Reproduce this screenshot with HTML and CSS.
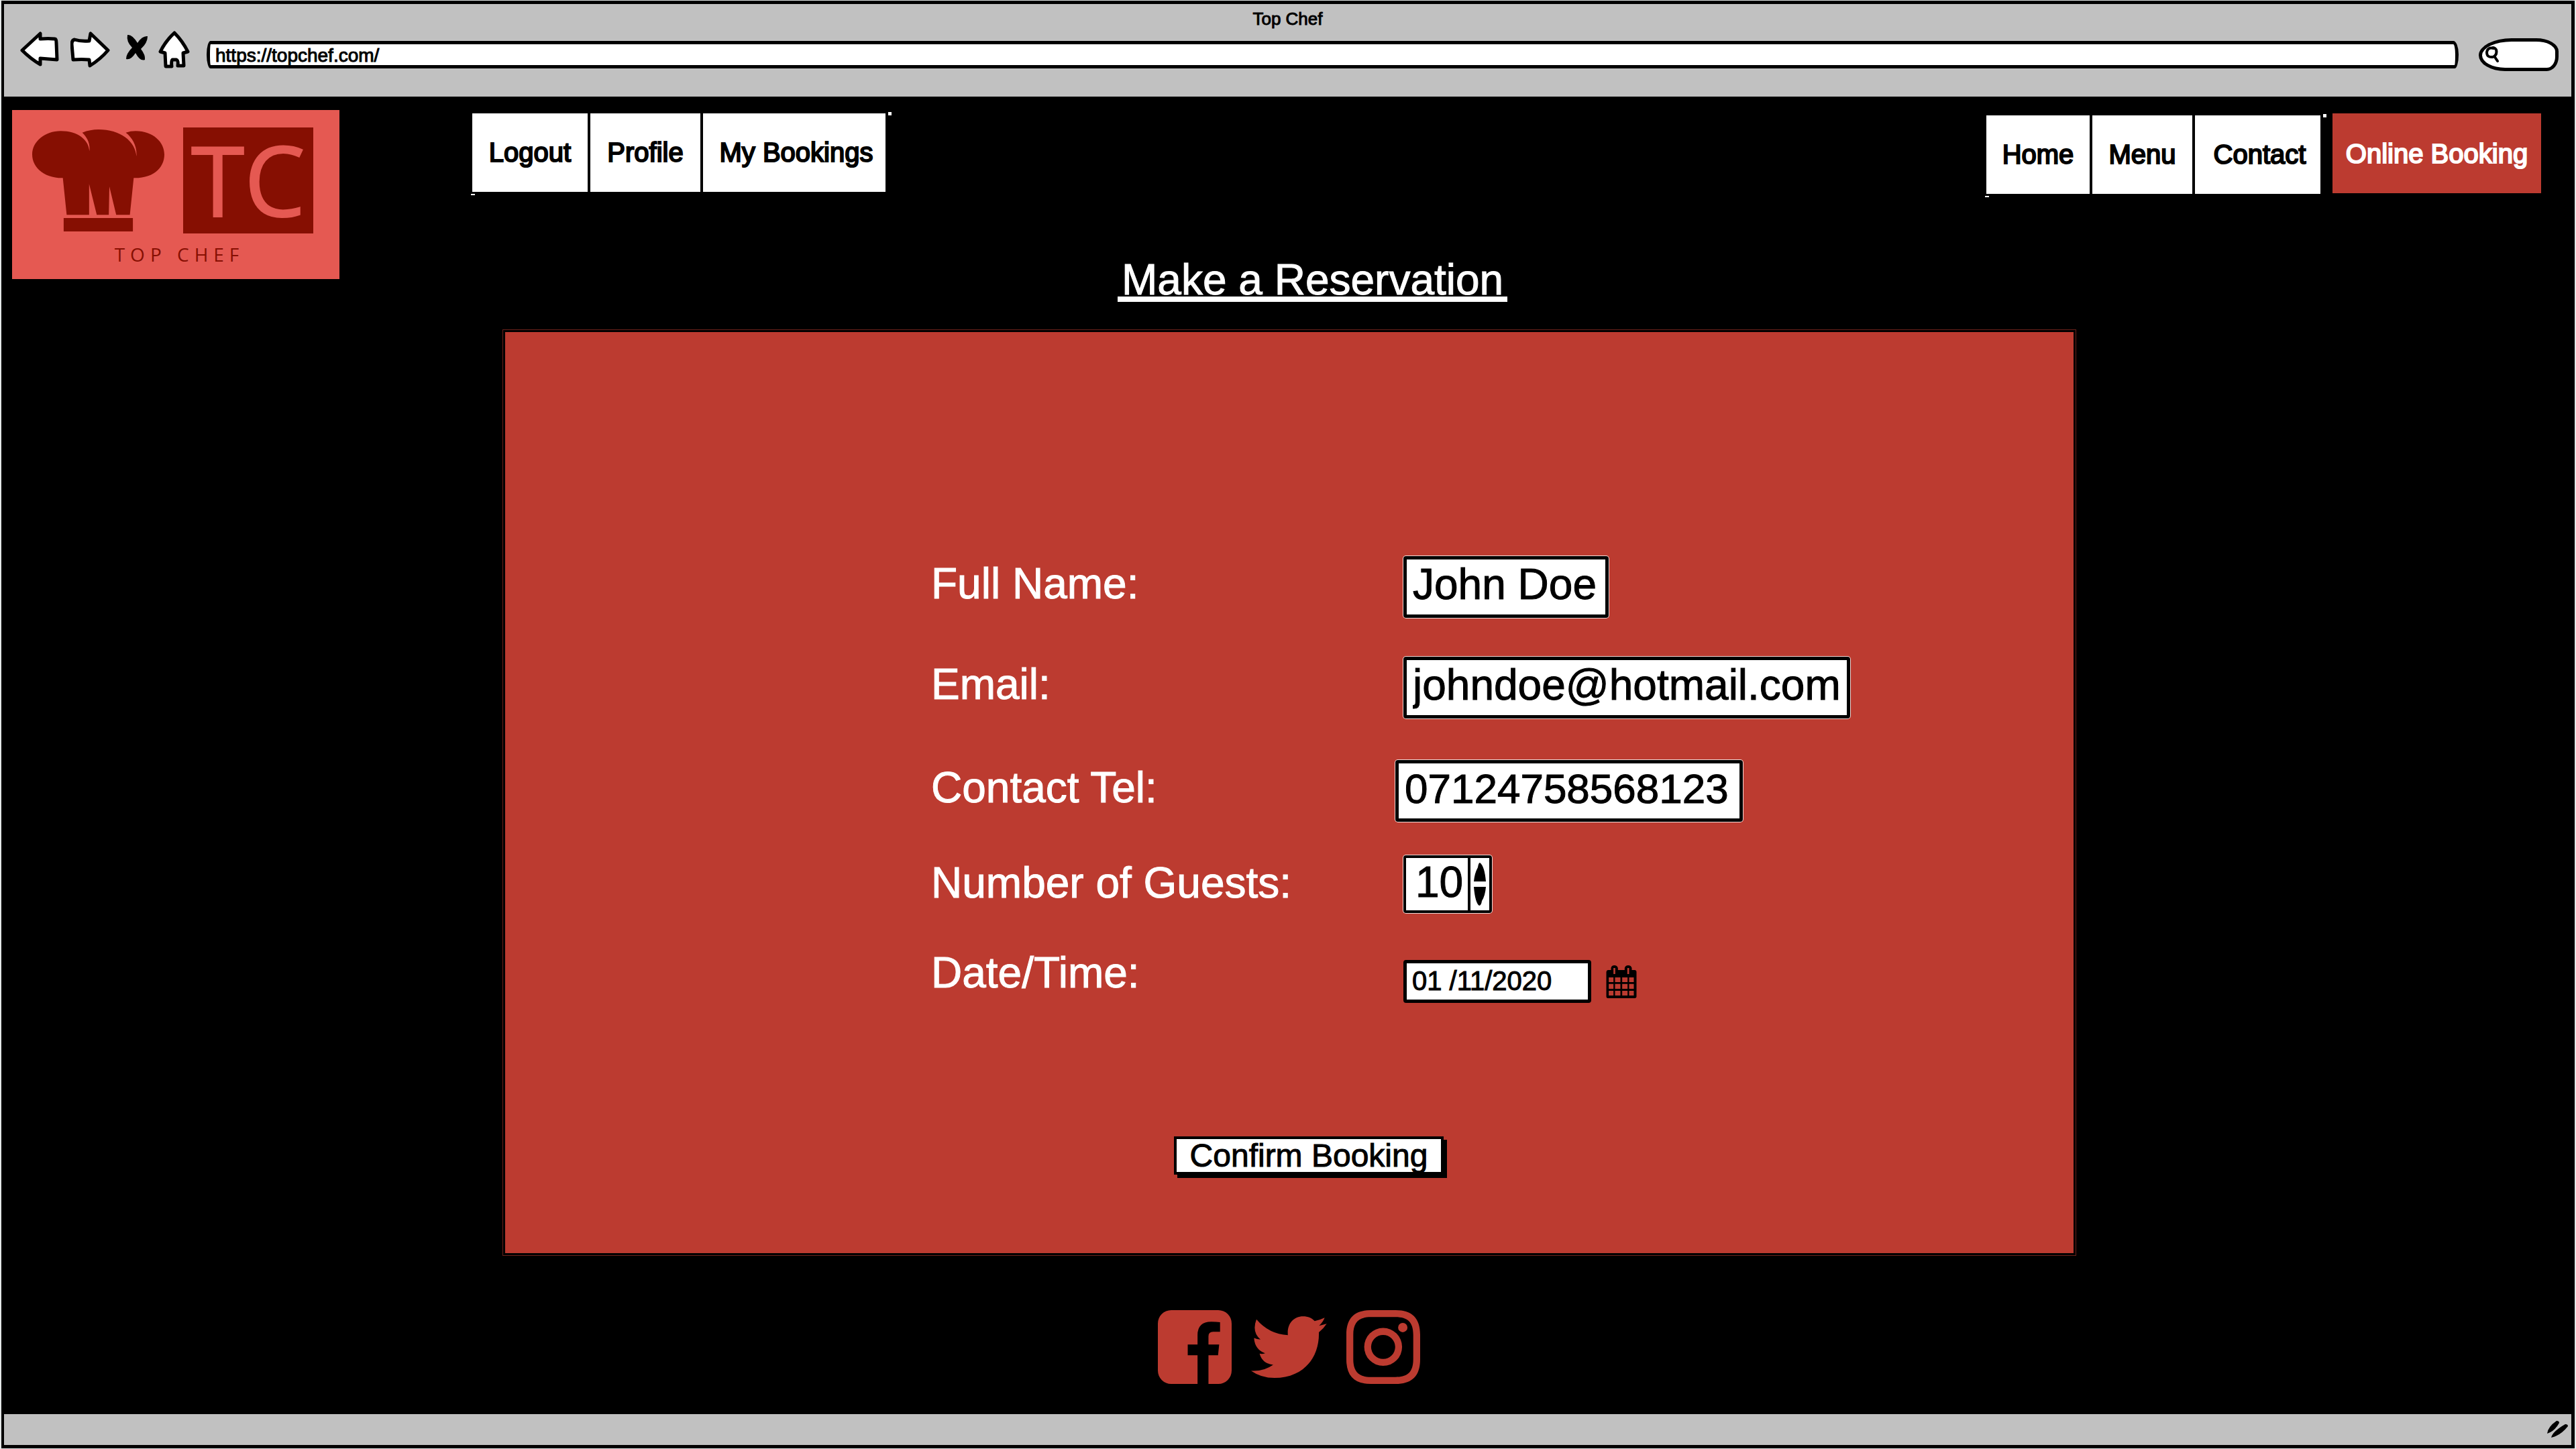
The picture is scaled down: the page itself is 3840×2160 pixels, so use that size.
FILE: index.html
```html
<!DOCTYPE html>
<html lang="en">
<head>
<meta charset="utf-8">
<title>Top Chef</title>
<link rel="stylesheet" href="styles.css">
</head>
<body>
<div class="window">
  <header class="chrome">
    <p class="chrome-title">Top Chef</p>
    <div class="toolbar">
      <button class="tool tool-back" type="button" aria-label="Back">
        <svg viewBox="30 46 58 60" width="58" height="60"><path class="sketch" d="M33 75L60 50L60 58Q72 57 82 58Q84 58 84 64L85 89Q72 88 60 87L60 96Q46 88 33 75Z"/></svg>
      </button>
      <button class="tool tool-forward" type="button" aria-label="Forward">
        <svg viewBox="105 46 60 60" width="60" height="60"><path class="sketch" d="M161 75L135 50L133 61Q120 62 111 59Q107 60 107 66L109 89Q122 88 133 89L134 98Q150 88 161 75Z"/></svg>
      </button>
      <button class="tool tool-stop" type="button" aria-label="Stop">
        <svg viewBox="187 46 34 60" width="34" height="60"><path d="M190 52Q197 51 205 64Q212 53 220 54Q220 64 210 73Q217 82 216 89Q209 92 202 79Q195 90 188 88Q188 80 197 71Q188 62 190 52Z"/></svg>
      </button>
      <button class="tool tool-home" type="button" aria-label="Home">
        <svg viewBox="236 46 47 60" width="47" height="60"><path class="sketch" d="M260 49Q272 61 280 77L273 79L274 98L265 98Q266 90 263 89L257 89Q255 91 256 99L247 99L246 79L239 77Q247 61 260 49Z"/></svg>
      </button>
      <input class="url" type="text" aria-label="Address" value="https://topchef.com/">
      <label class="search">
        <svg viewBox="0 0 22 26" width="22" height="26"><path d="M13 3Q4 1 3 9Q3 17 12 16Q19 13 17 5Q15 2 12 2M15 16L19 22"/></svg>
        <input type="search" aria-label="Search">
      </label>
    </div>
  </header>

  <div class="site">
    <div class="masthead">
      <a class="logo" href="#" aria-label="Top Chef home">
        <span class="logo-marks">
          <svg class="hat" viewBox="118 578 483 456" preserveAspectRatio="none"><path d="M222 585C285 585 325 625 327 675C331 640 318 612 301 592Q330 578 360 578C440 578 495 630 499 698C502 655 485 615 460 592Q478 585 496 585C560 585 601 635 601 690C601 750 560 797 489 795L475 960H425L400 833L398 960H354L326 822V960H244L230 795C165 797 118 750 118 690C118 632 165 585 222 585ZM233 974H486V1034H233Z"/></svg>
          <span class="monogram">TC</span>
        </span>
        <span class="logo-name">TOP CHEF</span>
      </a>
      <div class="masthead-body">
        <div class="nav-row">
          <nav class="tabs tabs-account" aria-label="Account">
            <a href="#">Logout</a><a href="#">Profile</a><a href="#">My Bookings</a>
          </nav>
          <nav class="tabs tabs-main" aria-label="Main">
            <a href="#">Home</a><a href="#">Menu</a><a href="#">Contact</a>
          </nav>
          <a class="book-link" href="#">Online Booking</a>
        </div>
        <h1>Make a Reservation</h1>
      </div>
    </div>

    <main class="panel">
      <form class="reservation">
        <div class="fields">
          <label for="name">Full Name:</label>
          <input class="box box-name" id="name" type="text" value="John Doe">
          <label for="email">Email:</label>
          <input class="box box-email" id="email" type="text" value="johndoe@hotmail.com">
          <label for="tel">Contact Tel:</label>
          <input class="box box-tel" id="tel" type="tel" value="07124758568123">
          <label for="guests">Number of Guests:</label>
          <div class="stepper">
            <input id="guests" type="number" value="10">
            <div class="steps">
              <button type="button" aria-label="More guests"><svg viewBox="0 0 18 28" width="18" height="28"><path d="M0 28Q1 16 6 7Q7 0 9 0Q16 5 18 28Z"/></svg></button>
              <button type="button" aria-label="Fewer guests"><svg viewBox="0 0 18 28" width="18" height="28"><path d="M0 0H18Q17 13 12 21Q11 28 8 28Q2 24 0 0Z"/></svg></button>
            </div>
          </div>
          <label for="date">Date/Time:</label>
          <div class="date-row">
            <input class="date" id="date" type="text" value="01 /11/2020">
            <button class="calendar" type="button" aria-label="Open calendar">
              <svg viewBox="1004 594 137 147" width="46" height="49"><path fill-rule="evenodd" d="M1012 615H1026V606Q1028 594 1041 594Q1054 594 1057 606V615H1087V606Q1090 594 1103 594Q1116 594 1119 606V615H1132Q1140 616 1140 624V733Q1140 741 1132 741H1012Q1005 741 1005 733V624Q1005 616 1012 615ZM1037 606V633H1045V606ZM1099 606V633H1107V606ZM1016 648V669H1037V648ZM1044 648V669H1068V648ZM1076 648V669H1100V648ZM1107 648V669H1128V648ZM1016 677V699H1037V677ZM1044 677V699H1068V677ZM1076 677V699H1100V677ZM1107 677V699H1128V677ZM1016 708V729H1037V708ZM1044 708V729H1068V708ZM1076 708V729H1100V708ZM1107 708V729H1128V708Z"/></svg>
            </button>
          </div>
        </div>
        <button class="confirm" type="submit">Confirm Booking</button>
      </form>
    </main>

    <footer class="social">
      <a href="#" aria-label="Facebook"><svg viewBox="0 0 331 331" width="110" height="110"><path d="M60 0H271A60 60 0 0 1 331 60V271A60 60 0 0 1 271 331H227V202H270L275 154H227V117Q227 97 248 97H279V54Q262 52 240 52Q178 52 178 112V154H134V202H178V331H60A60 60 0 0 1 0 271V60A60 60 0 0 1 60 0Z"/></svg></a>
      <a href="#" aria-label="Twitter"><svg viewBox="495 107 340 331" width="113" height="110"><path d="M519 148Q575 214 660 219C655 170 685 135 728 135C750 135 768 143 780 156Q805 151 825 141Q818 160 800 177Q818 173 834 168Q820 190 799 206C802 320 730 411 600 411Q540 411 495 379Q550 383 594 352Q545 347 533 302Q545 305 558 300Q512 285 508 232Q520 238 537 239Q497 205 519 148Z"/></svg></a>
      <a href="#" aria-label="Instagram"><svg viewBox="0 0 331 331" width="110" height="110"><path fill-rule="evenodd" d="M110 0H221C295 0 331 36 331 110V221C331 295 295 331 221 331H110C36 331 0 295 0 221V110C0 36 36 0 110 0ZM111 31C55 31 31 55 31 111V220C31 276 55 300 111 300H220C276 300 300 276 300 220V111C300 55 276 31 220 31ZM165 80A85 85 0 1 1 165 250A85 85 0 1 1 165 80ZM165 111A54 54 0 1 0 165 219A54 54 0 1 0 165 111Z"/><circle cx="253" cy="78" r="21"/></svg></a>
    </footer>
  </div>

  <div class="status-bar">
    <svg viewBox="3795 2120 36 30" width="36" height="30"><path d="M3797 2141Q3798 2131 3811 2122Q3815 2122 3815 2125Q3808 2138 3797 2141ZM3803 2147Q3805 2138 3824 2127Q3828 2127 3828 2130Q3817 2144 3803 2147Z"/></svg>
  </div>
</div>
</body>
</html>
```
FILE: styles.css
```css
:root {
  --red: #bc3b30;
  --grey: #c1c1c1;
  --coral: #e55952;
  --maroon: #860f02;
}

* { box-sizing: border-box; }

body {
  margin: 0;
  padding: 1px 2px;
  background: #e4e8e8;
  color: #000;
  font-family: "Liberation Sans", Arial, sans-serif;
}

a { color: inherit; text-decoration: none; }
svg { display: block; }

button, input {
  margin: 0;
  padding: 0;
  border: 0;
  background: none;
  color: inherit;
  font: inherit;
  -webkit-text-stroke: inherit;
}

.window {
  display: flex;
  flex-direction: column;
  min-height: calc(100vh - 2px);
  border: 5px solid #000;
  border-left-width: 4px;
  background: #000;
}

/* browser chrome */
.chrome {
  padding-bottom: 38px;
  background: var(--grey);
  -webkit-text-stroke: 1px;
}

.chrome-title {
  margin: 0;
  padding-top: 4px;
  font-size: 26px;
  line-height: 36px;
  text-align: center;
}

.toolbar {
  display: flex;
  padding: 0 19px 0 24px;
}

.sketch {
  fill: #fff;
  stroke: #000;
  stroke-width: 5;
  stroke-linejoin: round;
}

.tool-forward { margin-left: 17px; }
.tool-stop { margin-left: 22px; }
.tool-home { margin-left: 15px; }

.url {
  flex: 1;
  height: 41px;
  margin: 15px 0 0 25px;
  padding: 2px 8px 0;
  border: 5px solid #000;
  border-radius: 6px 8px 6px 6px / 20px 20px 20px 20px;
  background: #fff;
  font-size: 28px;
}

.search {
  display: flex;
  align-items: center;
  width: 119px;
  height: 49px;
  margin: 11px 0 0 30px;
  padding-left: 4px;
  border: 5px solid #000;
  border-radius: 50px 34px 18px 40px / 26px 20px 22px 24px;
  background: #fff;
}

.search path {
  fill: none;
  stroke: #000;
  stroke-width: 4;
  stroke-linecap: round;
}

.search input { flex: 1; min-width: 0; }

/* masthead */
.site { flex: 1; }

.masthead {
  display: flex;
  padding: 20px 45px 0 12px;
}

.logo {
  display: flex;
  flex-direction: column;
  flex: none;
  width: 488px;
  height: 252px;
  padding: 26px 39px 0 30px;
  background: var(--coral);
  color: var(--maroon);
  font-family: "Open Sans", "Liberation Sans", sans-serif;
}

.logo-marks {
  display: flex;
  justify-content: space-between;
}

.hat {
  width: 197px;
  height: 152px;
  margin-top: 3px;
  fill: var(--maroon);
}

.monogram {
  width: 194px;
  height: 158px;
  background: var(--maroon);
  color: var(--coral);
  font-size: 144px;
  line-height: 154px;
  text-align: center;
  -webkit-text-stroke: 2px;
}

.logo-name {
  padding-left: 20px;
  font-size: 28px;
  line-height: 62px;
  letter-spacing: 8px;
  text-align: center;
}

.masthead-body {
  flex: 1;
  margin-left: 198px;
}

.nav-row {
  display: flex;
  align-items: flex-start;
  height: 124px;
  padding-top: 5px;
  font-size: 40px;
  line-height: 117px;
  text-align: center;
  -webkit-text-stroke: 2px;
}

.tabs {
  position: relative;
  display: grid;
  gap: 4px;
}

.tabs a { background: #fff; }
.tabs a:nth-child(3) { padding-left: 6px; }
.tabs-account { grid-template-columns: 172px 164px 272px; }
.tabs-main {
  grid-template-columns: 154px 149px 187px;
  margin: 3px 18px 0 auto;
}

/* stray corner marks of the hand-drawn tab strips */
.tabs::before,
.tabs::after {
  content: "";
  position: absolute;
  background: #fff;
}

.tabs::before { top: -2px; right: -9px; width: 5px; height: 5px; }
.tabs::after { bottom: -5px; left: -2px; width: 6px; height: 2px; }

.book-link {
  width: 311px;
  padding-top: 2px;
  background: var(--red);
  color: #fff;
}

h1 {
  width: fit-content;
  margin: 104px 0 0 962px;
  padding: 0 6px;
  border-bottom: 8px solid #fff;
  color: #fff;
  font-size: 64px;
  font-weight: 400;
  line-height: 50px;
  -webkit-text-stroke: 1px;
}

/* reservation form */
.panel {
  margin: 41px 738px 0 743px;
  padding: 337px 0 120px 638px;
  border: 1px solid #6a211b;
  outline: 3px solid #000;
  outline-offset: -4px;
  background: var(--red);
  font-size: 64px;
  -webkit-text-stroke: 1px;
}

.fields {
  display: grid;
  grid-template-columns: 704px auto;
  grid-template-rows: 150px 154px 142px 134px 86px;
  align-items: start;
  justify-items: start;
}

.fields label {
  color: #fff;
  line-height: 82px;
}

.box {
  height: 92px;
  padding: 0 0 8px 9px;
  border: 5px solid #000;
  border-radius: 4px;
  background: #fff;
  box-shadow: 0 0 0 1px #f3d9d6;
}

.box-name { width: 306px; }
.box-email { width: 666px; }
.box-tel { width: 518px; margin-left: -12px; font-size: 62px; }

.stepper {
  display: flex;
  width: 132px;
  height: 86px;
  border: 4px solid #000;
  border-radius: 4px;
  background: #fff;
  box-shadow: 0 0 0 1px #f3d9d6;
}

.stepper input {
  width: 92px;
  padding: 0 0 6px 14px;
  appearance: textfield;
}

.stepper input::-webkit-inner-spin-button { appearance: none; margin: 0; }

.steps {
  display: flex;
  flex: 1;
  flex-direction: column;
  align-items: center;
  justify-content: center;
  gap: 8px;
  border-left: 4px solid #000;
}

.date-row {
  display: flex;
  align-items: center;
  align-self: end;
  gap: 22px;
}

.date {
  width: 280px;
  height: 64px;
  padding: 0 0 2px 8px;
  border: 5px solid #000;
  border-radius: 4px;
  background: #fff;
  font-size: 40px;
}

.confirm {
  display: block;
  width: 402px;
  height: 57px;
  margin: 199px 0 0 362px;
  border: 4px solid #000;
  background: #fff;
  box-shadow: 5px 5px 0 #000;
  font-size: 48px;
  line-height: 49px;
}

/* social links and window footer */
.social {
  display: flex;
  justify-content: center;
  gap: 29px;
  padding: 81px 0 36px 4px;
}

.social svg { fill: var(--red); }

.status-bar {
  display: flex;
  align-items: center;
  justify-content: flex-end;
  height: 46px;
  padding-right: 2px;
  background: var(--grey);
}
```
